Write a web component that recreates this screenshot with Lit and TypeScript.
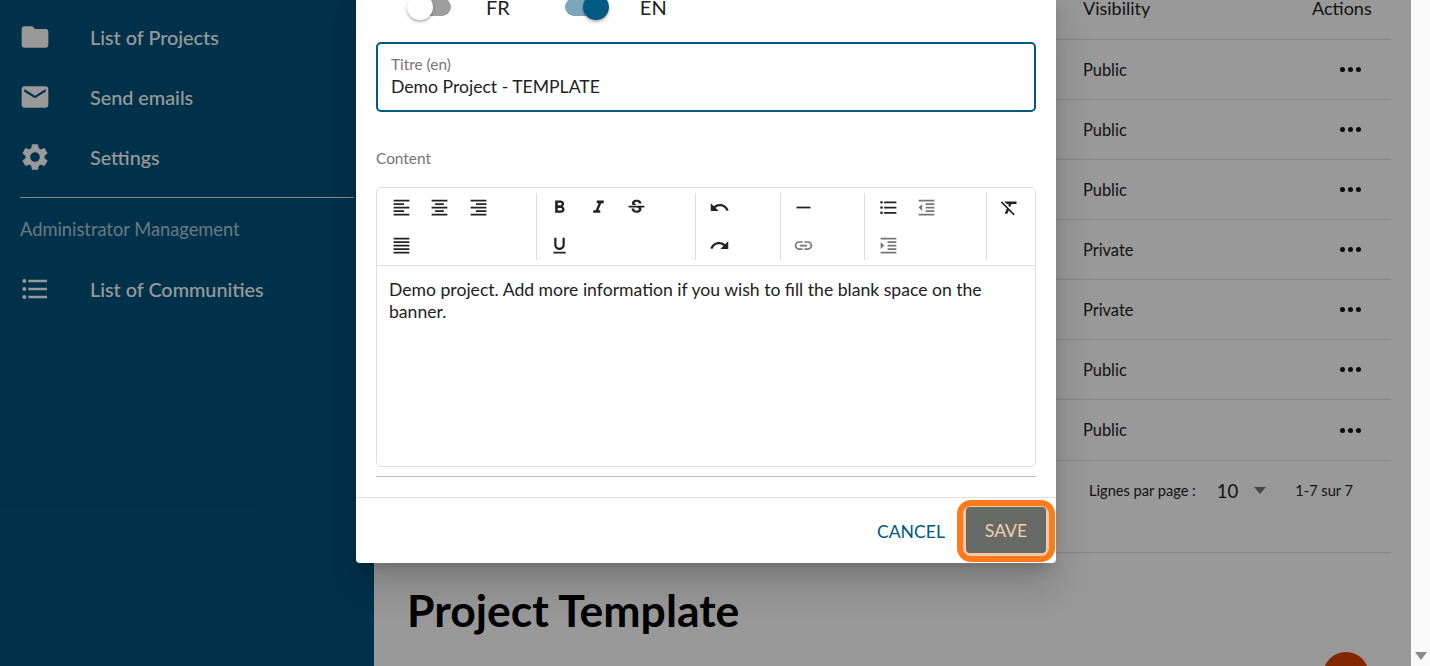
import { LitElement, html, css } from 'lit';
import { customElement } from 'lit/decorators.js';

const icons: Record<string, string> = {
  folder: 'M10 4H4c-1.1 0-1.99.9-1.99 2L2 18c0 1.1.9 2 2 2h16c1.1 0 2-.9 2-2V8c0-1.1-.9-2-2-2h-8l-2-2z',
  email: 'M20 4H4c-1.1 0-1.99.9-1.99 2L2 18c0 1.1.9 2 2 2h16c1.1 0 2-.9 2-2V6c0-1.1-.9-2-2-2zm0 4l-8 5-8-5V6l8 5 8-5v2z',
  settings: 'M19.14 12.94c.04-.3.06-.61.06-.94 0-.32-.02-.64-.07-.94l2.03-1.58c.18-.14.23-.41.12-.61l-1.92-3.32c-.12-.22-.37-.29-.59-.22l-2.39.96c-.5-.38-1.03-.7-1.62-.94l-.36-2.54c-.04-.24-.24-.41-.48-.41h-3.84c-.24 0-.43.17-.47.41l-.36 2.54c-.59.24-1.13.57-1.62.94l-2.39-.96c-.22-.08-.47 0-.59.22L2.74 8.87c-.12.21-.08.47.12.61l2.03 1.58c-.05.3-.09.63-.09.94s.02.64.07.94l-2.03 1.58c-.18.14-.23.41-.12.61l1.92 3.32c.12.22.37.29.59.22l2.39-.96c.5.38 1.03.7 1.62.94l.36 2.54c.05.24.24.41.48.41h3.84c.24 0 .44-.17.47-.41l.36-2.54c.59-.24 1.13-.56 1.62-.94l2.39.96c.22.08.47 0 .59-.22l1.92-3.32c.12-.22.07-.47-.12-.61l-2.01-1.58zM12 15.6c-1.98 0-3.6-1.62-3.6-3.6s1.62-3.6 3.6-3.6 3.6 1.62 3.6 3.6-1.62 3.6-3.6 3.6z',
  list: 'M4 10.5c-.83 0-1.5.67-1.5 1.5s.67 1.5 1.5 1.5 1.5-.67 1.5-1.5-.67-1.5-1.5-1.5zm0-6c-.83 0-1.5.67-1.5 1.5S3.17 7.5 4 7.5 5.5 6.83 5.5 6 4.83 4.5 4 4.5zm0 12c-.83 0-1.5.68-1.5 1.5s.68 1.5 1.5 1.5 1.5-.68 1.5-1.5-.67-1.5-1.5-1.5zM7 19h14v-2H7v2zm0-6h14v-2H7v2zm0-8v2h14V5H7z',
  left: 'M15 15H3v2h12v-2zm0-8H3v2h12V7zM3 13h18v-2H3v2zm0 8h18v-2H3v2zM3 3v2h18V3H3z',
  center: 'M7 15v2h10v-2H7zm-4 6h18v-2H3v2zm0-8h18v-2H3v2zm4-6v2h10V7H7zM3 3v2h18V3H3z',
  right: 'M3 21h18v-2H3v2zm6-4h12v-2H9v2zm-6-4h18v-2H3v2zm6-4h12V7H9v2zM3 3v2h18V3H3z',
  justify: 'M3 21h18v-2H3v2zm0-4h18v-2H3v2zm0-4h18v-2H3v2zm0-4h18V7H3v2zm0-6v2h18V3H3z',
  bold: 'M15.6 10.79c.97-.67 1.65-1.77 1.65-2.79 0-2.26-1.75-4-4-4H7v14h7.04c2.09 0 3.71-1.7 3.71-3.79 0-1.52-.86-2.82-2.15-3.42zM10 6.5h3c.83 0 1.5.67 1.5 1.5s-.67 1.5-1.5 1.5h-3v-3zm3.5 9H10v-3h3.5c.83 0 1.5.67 1.5 1.5s-.67 1.5-1.5 1.5z',
  italic: 'M10 4v3h2.21l-3.42 8H6v3h8v-3h-2.21l3.42-8H18V4z',
  strike: 'M7.24 8.75c-.26-.48-.39-1.03-.39-1.67 0-.61.13-1.16.4-1.67.26-.5.63-.93 1.11-1.29.48-.35 1.05-.63 1.7-.83.66-.19 1.39-.29 2.18-.29.81 0 1.54.11 2.21.34.66.22 1.23.54 1.69.94.47.4.83.88 1.08 1.43.25.55.38 1.15.38 1.81h-3.01c0-.31-.05-.59-.15-.85-.09-.27-.24-.49-.44-.68-.2-.19-.45-.33-.75-.44-.3-.1-.66-.16-1.06-.16-.39 0-.74.04-1.03.13-.29.09-.53.21-.72.36-.19.16-.34.34-.44.55-.1.21-.15.43-.15.66 0 .48.25.88.74 1.21.38.25.77.48 1.41.7H7.39c-.05-.08-.11-.17-.15-.25zM21 12v-2H3v2h9.62c.18.07.4.14.55.2.37.17.66.34.87.51.21.17.35.36.43.57.07.2.11.43.11.69 0 .23-.05.45-.14.66-.09.2-.23.38-.42.53-.19.15-.42.26-.71.35-.29.08-.63.13-1.01.13-.43 0-.83-.04-1.18-.13s-.66-.23-.91-.42c-.25-.19-.45-.44-.59-.75-.14-.31-.25-.76-.25-1.21H6.4c0 .55.08 1.13.24 1.58.16.45.37.85.65 1.21.28.35.6.66.98.92.37.26.78.48 1.22.65.44.17.9.3 1.38.39.48.08.96.13 1.44.13.8 0 1.53-.09 2.18-.28s1.21-.45 1.67-.79c.46-.34.82-.77 1.07-1.27s.38-1.07.38-1.71c0-.6-.1-1.14-.31-1.61-.05-.11-.11-.23-.17-.33H21z',
  underline: 'M12 17c3.31 0 6-2.69 6-6V3h-2.5v8c0 1.93-1.57 3.5-3.5 3.5S8.5 12.93 8.5 11V3H6v8c0 3.31 2.69 6 6 6zm-7 2v2h14v-2H5z',
  undo: 'M12.5 8c-2.65 0-5.05.99-6.9 2.6L2 7v9h9l-3.62-3.62c1.39-1.16 3.16-1.88 5.12-1.88 3.54 0 6.55 2.31 7.6 5.5l2.37-.78C21.08 11.03 17.15 8 12.5 8z',
  redo: 'M18.4 10.6C16.55 8.99 14.15 8 11.5 8c-4.65 0-8.58 3.03-9.96 7.22L3.9 16c1.05-3.19 4.05-5.5 7.6-5.5 1.95 0 3.73.72 5.12 1.88L13 16h9V7l-3.6 3.6z',
  hr: 'M4 11h16v2H4z',
  link: 'M3.9 12c0-1.71 1.39-3.1 3.1-3.1h4V7H7c-2.76 0-5 2.24-5 5s2.24 5 5 5h4v-1.9H7c-1.71 0-3.1-1.39-3.1-3.1zM8 13h8v-2H8v2zm9-6h-4v1.9h4c1.71 0 3.1 1.39 3.1 3.1s-1.39 3.1-3.1 3.1h-4V17h4c2.76 0 5-2.24 5-5s-2.24-5-5-5z',
  outdent: 'M11 17h10v-2H11v2zm-8-5l4 4V8l-4 4zm0 9h18v-2H3v2zM3 3v2h18V3H3zm8 6h10V7H11v2zm0 4h10v-2H11v2z',
  indent: 'M3 21h18v-2H3v2zM3 8v8l4-4-4-4zm8 9h10v-2H11v2zM3 3v2h18V3H3zm8 6h10V7H11v2zm0 4h10v-2H11v2z',
  clear: 'M3.27 5L2 6.27l6.97 6.97L6.5 19h3l1.57-3.66L16.73 21 18 19.73 3.55 5.27 3.27 5zM6 5v.18L8.82 8h2.4l-.72 1.68 2.1 2.1L14.21 8H20V5H6z',
};

const icon = (name: string) => html`<svg viewBox="0 0 24 24" fill="currentColor"><path d=${icons[name]}></path></svg>`;

const rows = ['Public', 'Public', 'Public', 'Private', 'Private', 'Public', 'Public'];

// each group: css class for its width, then buttons in order ("!" marks a disabled one)
const toolbar = [
  { cls: 'g1', items: ['left', 'center', 'right', '', 'justify'] },
  { cls: 'g2', items: ['bold', 'italic', 'strike', '', 'underline'] },
  { cls: 'g3', items: ['undo', 'redo'] },
  { cls: 'g4', items: ['hr', '!link'] },
  { cls: 'g5', items: ['list', '!outdent', '!indent'] },
  { cls: 'g6', items: ['clear'] },
];

@customElement('app-root')
export class AppRoot extends LitElement {
  static styles = css`
    :host {
      display: block;
      position: relative;
      height: 666px;
      overflow: hidden;
      font-family: 'Lato', 'Liberation Sans', sans-serif;
      color: #222;
      background: #fff;
    }
    .page {
      display: flex;
      height: 666px;
    }
    .sidebar {
      width: 374px;
      flex: none;
      box-sizing: border-box;
      padding: 7px 20px 0;
      background: #00537d;
      color: #fff;
    }
    .nav {
      display: flex;
      align-items: center;
      height: 60px;
      font-size: 19.8px;
      font-weight: 500;
    }
    .nav svg {
      width: 32px;
      height: 32px;
      margin-left: -1px;
      margin-right: 39px;
      flex: none;
    }
    .side-div {
      height: 1px;
      background: rgba(255, 255, 255, 0.85);
      margin-top: 10px;
    }
    .side-label {
      font-size: 18.3px;
      line-height: 20px;
      margin: 21px 0 20px;
      color: rgba(255, 255, 255, 0.7);
    }
    .main {
      flex: 1;
      min-width: 0;
      padding-right: 20px;
      position: relative;
    }
    .row {
      display: flex;
      align-items: center;
      height: 60px;
      padding-bottom: 1px;
      box-sizing: border-box;
      border-bottom: 1px solid rgba(0, 0, 0, 0.12);
      font-size: 16.4px;
    }
    .row.head {
      height: 40px;
      padding-bottom: 23px;
      font-size: 18px;
      line-height: 18px;
    }
    .row.last {
      height: 61px;
    }
    .vis {
      margin-left: auto;
      width: 229px;
    }
    .act {
      width: 79px;
    }
    .dots {
      display: flex;
      gap: 3px;
      padding-left: 28px;
      margin-top: 1px;
    }
    .dots i {
      width: 5px;
      height: 5px;
      border-radius: 50%;
      background: #111;
    }
    .pager {
      display: flex;
      align-items: center;
      justify-content: flex-end;
      height: 92px;
      padding-bottom: 32px;
      box-sizing: border-box;
      border-bottom: 1px solid rgba(0, 0, 0, 0.12);
      font-size: 14.6px;
      padding-right: 38px;
    }
    .pager .num {
      font-size: 18.5px;
      margin-left: 21px;
    }
    .pager .caret {
      width: 0;
      height: 0;
      border: 6.5px solid transparent;
      border-top: 7px solid #757575;
      border-bottom: 0;
      margin: 0 29px 0 16px;
    }
    h1 {
      font-size: 44.5px;
      font-weight: 700;
      color: #000;
      margin: 29px 0 0 33px;
      line-height: 56px;
    }
    .fab {
      position: absolute;
      left: 949px;
      top: 652px;
      width: 46px;
      height: 46px;
      border-radius: 50%;
      background: #d94400;
    }
    .scrollbar {
      width: 19px;
      flex: none;
      background: #fafafa;
      display: flex;
      justify-content: center;
      align-items: flex-end;
      padding-bottom: 6px;
      box-sizing: border-box;
    }
    .scrollbar i {
      width: 0;
      height: 0;
      border: 6.5px solid transparent;
      border-top: 8px solid #8a8a8a;
      border-bottom: 0;
    }
    .scrim {
      position: absolute;
      left: 0;
      top: 0;
      width: 1411px;
      height: 666px;
      background: rgba(0, 0, 0, 0.4);
    }
    .modal {
      position: absolute;
      left: 356px;
      bottom: 103px;
      width: 700px;
      background: #fff;
      border-radius: 4px;
      box-shadow: 0 11px 15px -7px rgba(0, 0, 0, 0.2), 0 24px 38px 3px rgba(0, 0, 0, 0.14);
    }
    .body {
      padding: 0 20px;
    }
    .langs {
      display: flex;
      align-items: center;
      height: 46px;
      font-size: 20px;
      line-height: 16px;
    }
    .toggle {
      position: relative;
      width: 43px;
      height: 18px;
      border-radius: 9px;
      background: #9e9e9e;
      margin-left: 32px;
      margin-right: 35px;
    }
    .toggle i {
      position: absolute;
      top: -4px;
      left: -1px;
      width: 26px;
      height: 26px;
      border-radius: 50%;
      background: #fff;
      box-shadow: 0 2px 3px rgba(0, 0, 0, 0.3);
    }
    .toggle.on {
      background: #7ba6bc;
      margin-left: 55px;
      margin-right: 32px;
    }
    .toggle.on i {
      left: 18px;
      background: #005a82;
    }
    .field {
      margin-top: 12px;
      height: 70px;
      box-sizing: border-box;
      border: 2px solid #005a82;
      border-radius: 5px;
      padding: 11px 13px 0;
    }
    .field label {
      display: block;
      font-size: 15.4px;
      line-height: 18px;
      color: #757575;
    }
    .field div {
      font-size: 17.6px;
      line-height: 25px;
      margin-top: 1px;
    }
    .content-label {
      font-size: 15.4px;
      line-height: 18px;
      color: #757575;
      margin: 37px 0 20px;
    }
    .editor {
      height: 280px;
      box-sizing: border-box;
      border: 1px solid #e0e0e0;
      border-radius: 5px;
    }
    .toolbar {
      display: flex;
      height: 78px;
      box-sizing: border-box;
      padding: 5px 0;
      border-bottom: 1px solid #e0e0e0;
    }
    .group {
      display: grid;
      grid-template-columns: repeat(4, 38.5px);
      grid-auto-rows: 29px;
      row-gap: 9px;
      box-sizing: border-box;
      flex: none;
      padding-left: 4px;
      border-right: 1px solid #ddd;
    }
    .g1 { width: 160px; padding-left: 5px; }
    .g2 { width: 159px; padding-left: 3.5px; }
    .g3 { width: 85px; grid-template-columns: 38.5px; }
    .g4 { width: 84px; grid-template-columns: 38.5px; padding-left: 3px; border-right-width: 1.5px; }
    .g5 { width: 122px; grid-template-columns: 38.5px 38.5px; }
    .g6 { width: 44px; grid-template-columns: 38.5px; padding-left: 3px; border-right: 0; }
    .g5 .tool:nth-child(3) { grid-row: 2; grid-column: 1; }
    .tool {
      display: flex;
      align-items: center;
      justify-content: center;
      color: #222;
    }
    .tool.off {
      color: #777;
    }
    .tool svg {
      width: 21px;
      height: 21px;
    }
    .text {
      padding: 13px 12px;
      font-size: 17.6px;
      line-height: 22px;
    }
    .underline {
      height: 1px;
      background: #bdbdbd;
      margin-top: 9px;
    }
    .footer {
      display: flex;
      align-items: center;
      justify-content: flex-end;
      height: 66px;
      margin-top: 20px;
      border-top: 1px solid #e0e0e0;
      box-sizing: border-box;
      padding-right: 10px;
      font-size: 17.6px;
      position: relative;
    }
    .cancel {
      color: #005a82;
      padding-top: 1px;
      margin-right: 21px;
    }
    .save {
      width: 80px;
      height: 46px;
      margin-top: -2px;
      padding-top: 2px;
      box-sizing: border-box;
      border-radius: 4px;
      background: #666b66;
      color: #f5cdb0;
      display: flex;
      align-items: center;
      justify-content: center;
      box-shadow: 0 0 0 3px #f3c9aa;
      position: relative;
    }
    .save::after {
      content: '';
      position: absolute;
      inset: -7px -9px -9px -9px;
      border: 6px solid #ff7a1a;
      border-radius: 14px;
    }
  `;

  render() {
    return html`
      <div class="page">
        <div class="sidebar">
          <div class="nav">${icon('folder')}List of Projects</div>
          <div class="nav">${icon('email')}Send emails</div>
          <div class="nav">${icon('settings')}Settings</div>
          <div class="side-div"></div>
          <div class="side-label">Administrator Management</div>
          <div class="nav">${icon('list')}List of Communities</div>
        </div>
        <div class="main">
          <div class="row head"><span class="vis">Visibility</span><span class="act">Actions</span></div>
          ${rows.map((v, i) => html`
            <div class="row ${i === rows.length - 1 ? 'last' : ''}">
              <span class="vis">${v}</span>
              <span class="act"><div class="dots"><i></i><i></i><i></i></div></span>
            </div>
          `)}
          <div class="pager">
            <span>Lignes par page :</span>
            <span class="num">10</span>
            <span class="caret"></span>
            <span>1-7 sur 7</span>
          </div>
          <h1>Project Template</h1>
          <div class="fab"></div>
        </div>
        <div class="scrollbar"><i></i></div>
      </div>
      <div class="scrim"></div>
      <div class="modal">
        <div class="body">
          <div class="langs">
            <div class="toggle"><i></i></div><span>FR</span>
            <div class="toggle on"><i></i></div><span>EN</span>
          </div>
          <div class="field">
            <label>Titre (en)</label>
            <div>Demo Project - TEMPLATE</div>
          </div>
          <div class="content-label">Content</div>
          <div class="editor">
            <div class="toolbar">
              ${toolbar.map(g => html`
                <div class="group ${g.cls}">
                  ${g.items.map(n => n
                    ? html`<span class="tool ${n.startsWith('!') ? 'off' : ''}">${icon(n.replace('!', ''))}</span>`
                    : html`<span></span>`)}
                </div>
              `)}
            </div>
            <div class="text">Demo project. Add more information if you wish to fill the blank space on the banner.</div>
          </div>
          <div class="underline"></div>
        </div>
        <div class="footer">
          <span class="cancel">CANCEL</span>
          <span class="save">SAVE</span>
        </div>
      </div>
    `;
  }
}
